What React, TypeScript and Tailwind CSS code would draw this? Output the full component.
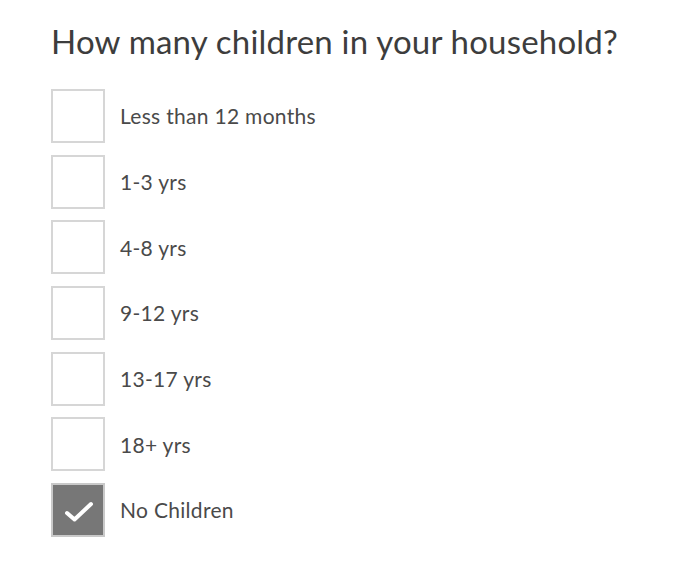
import { useState } from "react";

const options = [
  "Less than 12 months",
  "1-3 yrs",
  "4-8 yrs",
  "9-12 yrs",
  "13-17 yrs",
  "18+ yrs",
  "No Children",
];

const App = () => {
  const [checked, setChecked] = useState<string[]>(["No Children"]);

  const toggle = (opt: string) => {
    setChecked((prev) =>
      prev.includes(opt) ? prev.filter((o) => o !== opt) : [...prev, opt]
    );
  };

  return (
    <div
      className="min-h-[565px] w-[700px] bg-white pl-[51px] pt-[21px]"
      style={{ fontFamily: "Lato, 'Open Sans', sans-serif" }}
    >
      <h1 className="text-[33px] leading-[40px] tracking-[0.2px] text-[#3d3d3d]">
        How many children in your household?
      </h1>

      <div className="mt-[28px] flex flex-col gap-[11.67px]">
        {options.map((opt) => {
          const isOn = checked.includes(opt);
          return (
            <label
              key={opt}
              className="flex cursor-pointer items-center gap-[15px]"
              onClick={() => toggle(opt)}
            >
              {isOn ? (
                <div className="flex h-[54px] w-[54px] items-center justify-center border-2 border-[#c9c9c9] bg-[#777777]">
                  <svg width="50" height="50" viewBox="0 0 50 50">
                    <path
                      d="M14 28 L21.5 34.5 L38 19"
                      fill="none"
                      stroke="white"
                      strokeWidth="4"
                      strokeLinecap="round"
                      strokeLinejoin="round"
                    />
                  </svg>
                </div>
              ) : (
                <div className="h-[54px] w-[54px] border-2 border-[#d6d6d6] bg-white" />
              )}
              <span className="text-[21px] tracking-[0.3px] text-[#4a4a4a]">{opt}</span>
            </label>
          );
        })}
      </div>
    </div>
  );
};

export default App;
